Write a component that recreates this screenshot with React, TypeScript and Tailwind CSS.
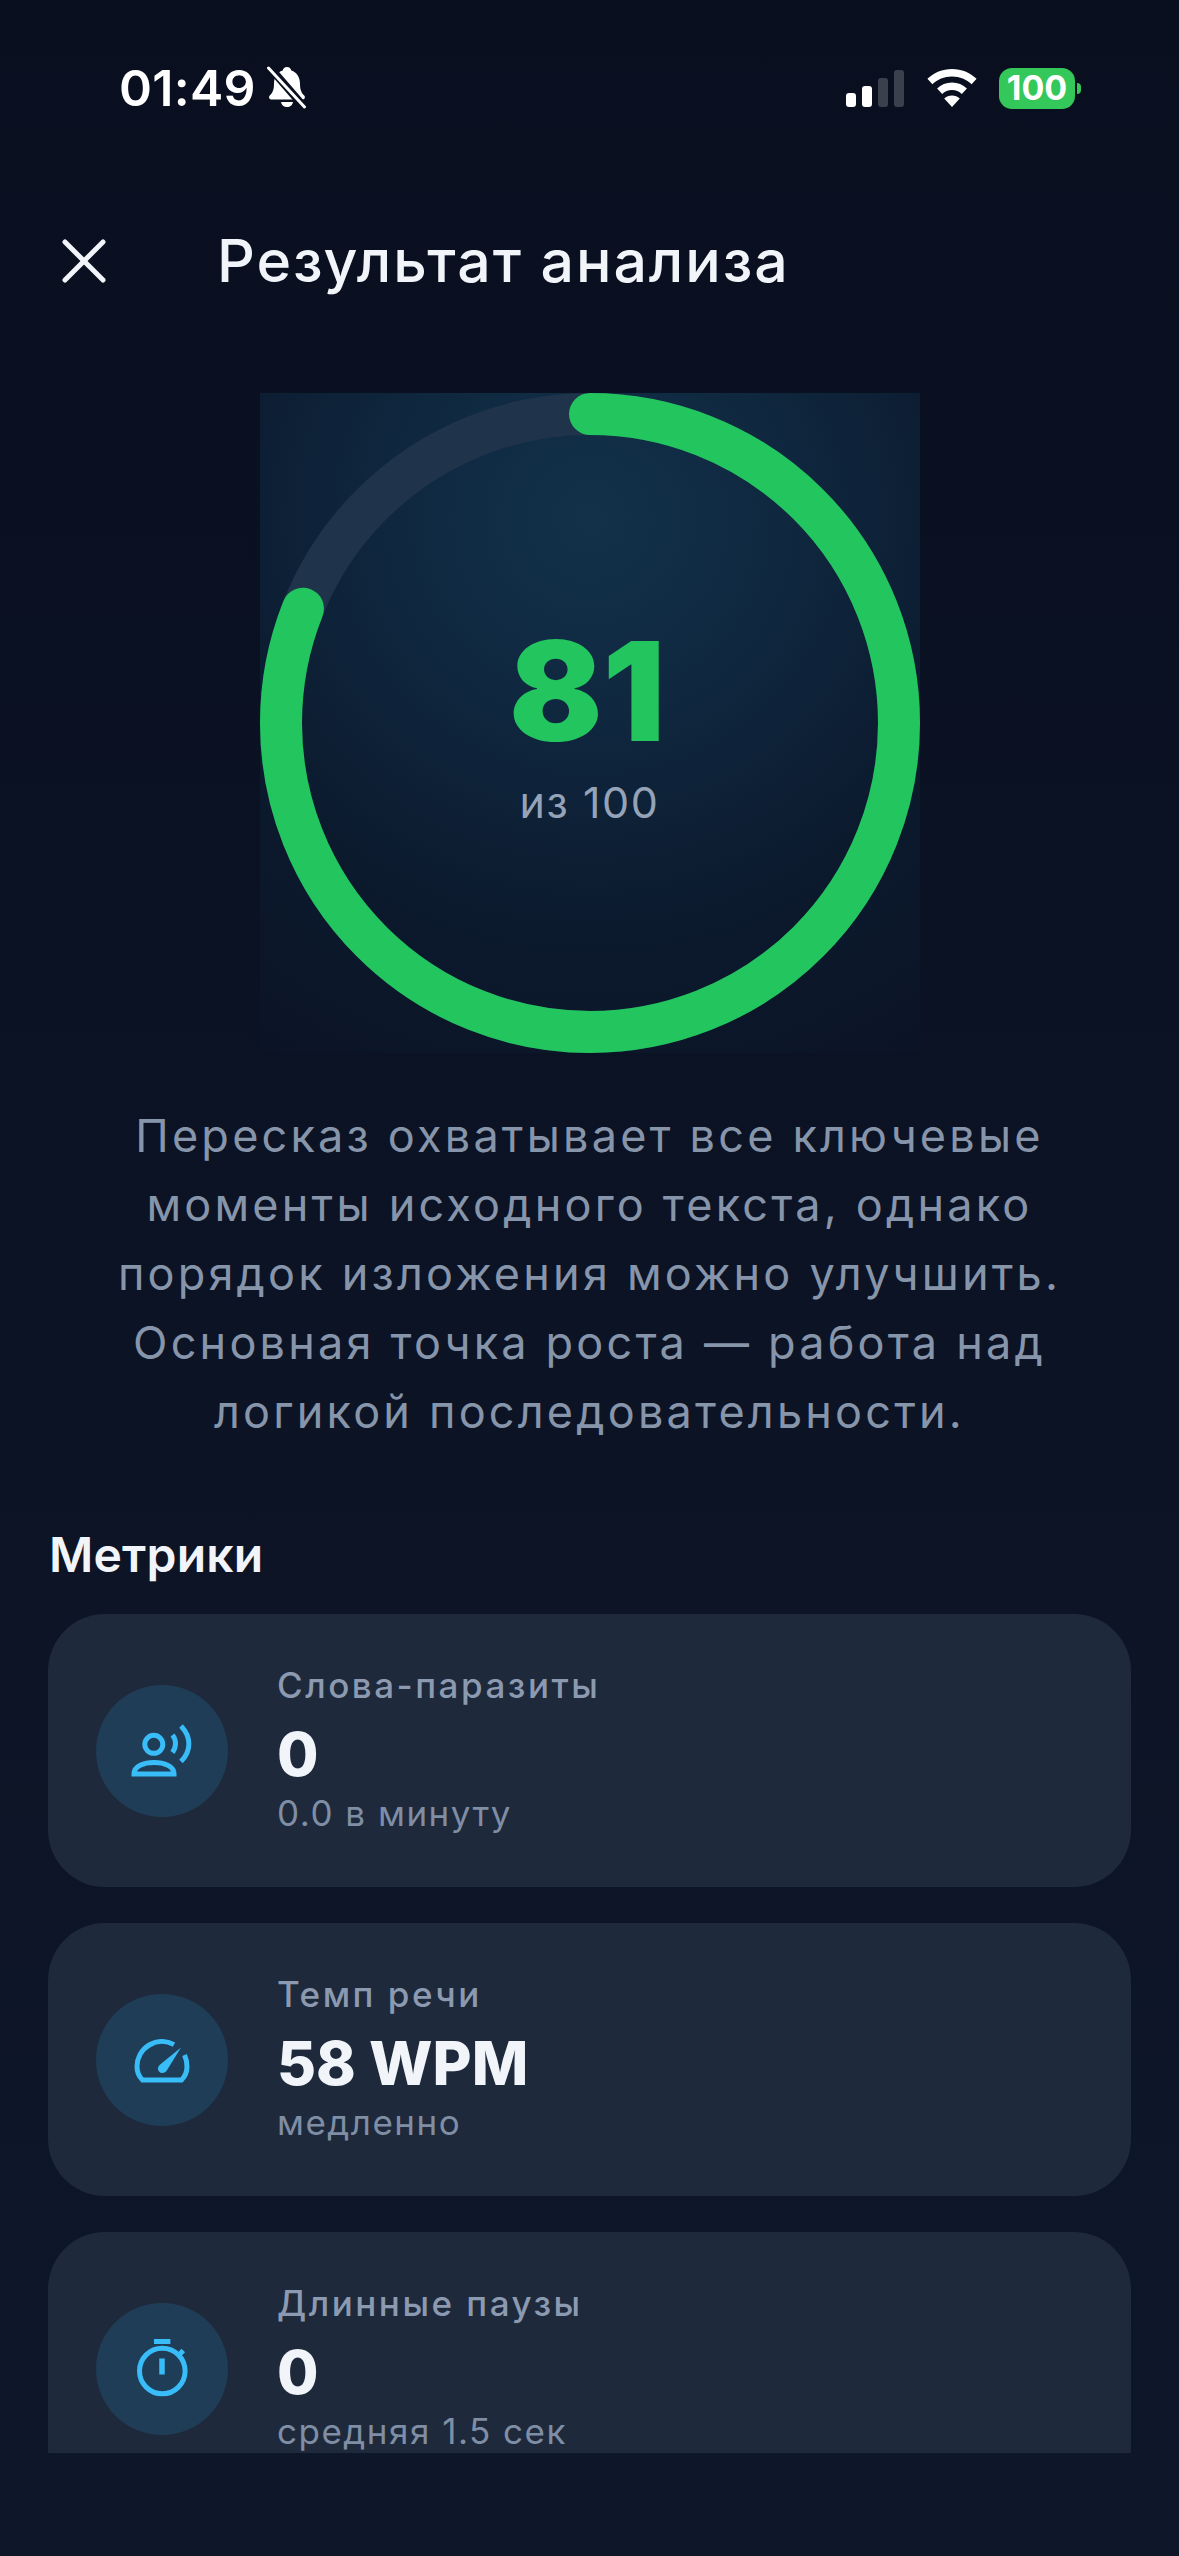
const sans = "font-['Inter','Noto_Sans',sans-serif]";

function BellOff() {
  return (
    <svg width="40" height="44" viewBox="0 0 40 44" className="ml-[11px] mt-[-3px]">
      <path d="M20 2c2.400 0 4 1.700 4.300 3.600C30 7.400 33 12.600 33 19c0 6 1.600 8.800 4.200 11.500 1.400 1.500.6 4-1.700 4H4.500c-2.300 0-3.100-2.500-1.700-4C5.400 27.800 7 25 7 19c0-6.400 3-11.600 8.700-13.400C16 3.700 17.600 2 20 2z" fill="#fff" />
      <path d="M14 37h12c-.5 3-3 5-6 5s-5.500-2-6-5z" fill="#fff" />
      <path d="M2 1.500 38 43" stroke="#0a1020" strokeWidth="8" />
      <path d="M1.500 3 37.500 42" stroke="#fff" strokeWidth="3" strokeLinecap="round" />
    </svg>
  );
}

function Wifi() {
  return (
    <svg width="50" height="38" viewBox="0 0 50 38">
      <path d="M25 0C15.500 0 6.800 3.700.4 9.800l5 5.500C10.400 10.500 17.300 7.500 25 7.500s14.600 3 19.600 7.800l5-5.500C43.200 3.700 34.500 0 25 0z" fill="#fff" />
      <path d="M25 13.500c-5.800 0-11 2.200-14.900 5.900l5.100 5.500c2.600-2.400 6-3.900 9.800-3.900s7.200 1.500 9.800 3.900l5.100-5.500C36 15.700 30.800 13.500 25 13.500z" fill="#fff" />
      <path d="M25 26.500c-3 0-5.700 1.100-7.800 3L25 38l7.800-8.500c-2.100-1.900-4.800-3-7.800-3z" fill="#fff" />
    </svg>
  );
}

function StatusBar() {
  return (
    <div className="flex h-[174px] shrink-0 items-start justify-between pl-[119px] pr-[98px] pt-[67px]">
      <div className="flex h-[42px] items-center">
        <span className="text-[50px] font-semibold leading-[42px] tracking-[0.3px] text-white">01:49</span>
        <BellOff />
      </div>
      <div className="flex h-[42px] items-center">
        <div className="flex items-end gap-[6px]">
          <div className="h-[14px] w-[10px] rounded-[3px] bg-white" />
          <div className="h-[21px] w-[10px] rounded-[3px] bg-white" />
          <div className="h-[29px] w-[10px] rounded-[3px] bg-[#3b404d]" />
          <div className="h-[37px] w-[10px] rounded-[3px] bg-[#3b404d]" />
        </div>
        <div className="ml-[23px] mr-[22px]">
          <Wifi />
        </div>
        <div className="flex h-[41px] w-[76px] items-center justify-center rounded-[13px] bg-[#34c759] text-[34px] font-bold leading-none text-white">
          100
        </div>
        <div className="ml-[2px] h-[11px] w-[4px] rounded-r-[4px] bg-[#34c759]" />
      </div>
    </div>
  );
}

function Header() {
  return (
    <div className="flex h-[174px] shrink-0 items-center pl-[61px]">
      <svg width="46" height="46" viewBox="0 0 46 46" fill="none" stroke="#f1f5f9" strokeWidth="5" strokeLinecap="round">
        <path d="M4 4 42 42" />
        <path d="M42 4 4 42" />
      </svg>
      <h1 className="ml-[110px] mt-[-2px] text-[59px] font-medium leading-none tracking-[1.9px] text-[#f1f5f9]">
        Результат анализа
      </h1>
    </div>
  );
}

function ScoreRing() {
  const r = 309;
  const c = 2 * Math.PI * r;
  return (
    <div className="relative mx-auto mt-[45px] h-[660px] w-[660px] shrink-0 bg-[radial-gradient(circle_at_50%_19%,#12324a_0%,#0f2840_30%,#0c1a2e_65%,#0b1425_100%)]">
      <svg width="660" height="660" viewBox="0 0 660 660" fill="none" strokeWidth="42">
        <circle cx="330" cy="330" r={r} stroke="#1f334b" />
        <circle
          cx="330"
          cy="330"
          r={r}
          stroke="#22c55e"
          strokeLinecap="round"
          strokeDasharray={`${c * 0.81} ${c}`}
          transform="rotate(-90 330 330)"
        />
      </svg>
      <div className="absolute inset-0 flex flex-col items-center pt-[229px]">
        <div className="pr-[5px] text-[138px] font-black leading-[138px] text-[#22c55e]">81</div>
        <div className="mt-[17px] text-[43px] leading-[50px] tracking-[1.6px] text-[#94a3b8]">из 100</div>
      </div>
    </div>
  );
}

function SpeakerIcon() {
  return (
    <svg width="132" height="132" viewBox="0 0 132 132" fill="none" stroke="#38bdf8" strokeWidth="5">
      <circle cx="57.800" cy="59.300" r="9" />
      <path d="M38 89c0-8 10-11.500 20-11.500s20 3.500 20 11.500z" />
      <path d="M76.500 50c4 5 4 12 0 17.500" />
      <path d="M85 41c10.500 11 10.500 25 0 35.500" />
    </svg>
  );
}

function GaugeIcon() {
  return (
    <svg width="132" height="132" viewBox="0 0 132 132" fill="none" stroke="#38bdf8" strokeWidth="5">
      <path d="M78 50.600A25 25 0 0 0 41 72.500c0 5 1.800 9.800 5.500 13.500h39c3.700-3.700 5.500-8.500 5.500-13.500 0-4-.8-7.800-2.500-11.500" />
      <path d="M85 53.500 70.500 77c-2.200 2.500-5.500 2.500-7.300.7-2-2-1.700-5 .7-7z" fill="#38bdf8" stroke="none" />
    </svg>
  );
}

function TimerIcon() {
  return (
    <svg width="132" height="132" viewBox="0 0 132 132" fill="none" stroke="#38bdf8" strokeWidth="5">
      <path d="M58 38.500h16.400" />
      <circle cx="66.300" cy="68" r="22.800" />
      <path d="M66 55.500v16" strokeWidth="5.500" />
      <path d="M82.300 52.500l5-5" />
    </svg>
  );
}

function MetricCard({ icon, label, value, sub }: { icon: React.ReactNode; label: string; value: string; sub: string }) {
  return (
    <div className="flex h-[273px] shrink-0 items-center rounded-[57px] bg-[#1e293b] pl-[48px]">
      <div className="h-[132px] w-[132px] shrink-0 rounded-full bg-[#203d57]">{icon}</div>
      <div className="mb-[3px] ml-[49px] flex flex-col">
        <div className="text-[35px] font-medium leading-[44px] tracking-[2.5px] text-[#8b9ab0]">{label}</div>
        <div className="mt-[10px] text-[60px] font-extrabold leading-[74px] text-[#f1f5f9]">{value}</div>
        <div className="text-[35px] font-normal leading-[44px] tracking-[1.5px] text-[#7f8ea5]">{sub}</div>
      </div>
    </div>
  );
}

export default function App() {
  return (
    <div className={`${sans} flex h-[2556px] w-[1179px] flex-col overflow-hidden bg-gradient-to-b from-[#090f1f] to-[#0e172a]`}>
      <StatusBar />
      <div className="h-[2279px] shrink-0 overflow-hidden">
        <div className="flex flex-col">
          <Header />
          <ScoreRing />
          <p className="mx-auto mb-[1px] mt-[48px] w-[980px] text-center text-[45px] leading-[69px] tracking-[3.2px] text-[#8795ab]">
            Пересказ охватывает все ключевые моменты исходного текста, однако порядок изложения можно улучшить. Основная точка роста — работа над логикой последовательности.
          </p>
          <h2 className="ml-[49px] mt-[78px] text-[48px] font-semibold leading-[60px] tracking-[0.2px] text-[#f1f5f9]">Метрики</h2>
          <div className="mx-[48px] mt-[29px] flex flex-col gap-[36px]">
            <MetricCard icon={<SpeakerIcon />} label="Слова-паразиты" value="0" sub="0.0 в минуту" />
            <MetricCard icon={<GaugeIcon />} label="Темп речи" value="58 WPM" sub="медленно" />
            <MetricCard icon={<TimerIcon />} label="Длинные паузы" value="0" sub="средняя 1.5 сек" />
          </div>
        </div>
      </div>
    </div>
  );
}
